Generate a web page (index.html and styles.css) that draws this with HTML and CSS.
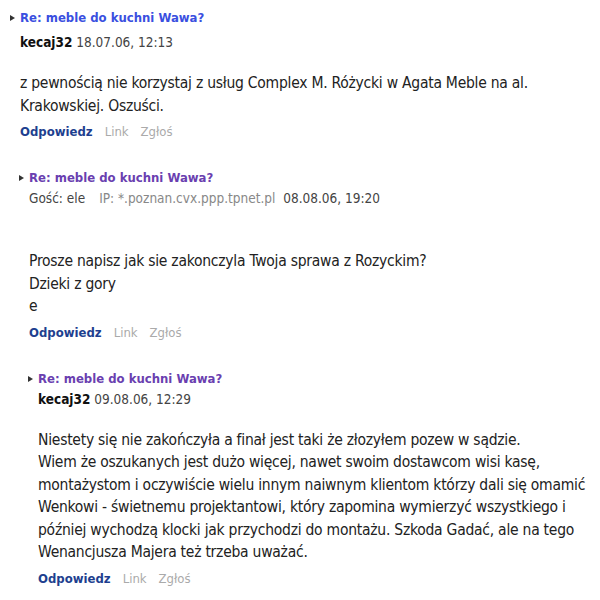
FILE: index.html
```html
<!DOCTYPE html>
<html lang="pl">
<head>
<meta charset="utf-8">
<title>Re: meble do kuchni Wawa?</title>
<link rel="stylesheet" href="styles.css">
</head>
<body>
<div class="thread">
  <div class="post">
    <div class="title"><span class="arrow"></span><a class="subject new" href="#">Re: meble do kuchni Wawa?</a></div>
    <div class="meta first"><b class="author">kecaj32</b> 18.07.06, 12:13</div>
    <div class="body">z pewnością nie korzystaj z usług Complex M. Różycki w Agata Meble na al. Krakowskiej. Oszuści.</div>
    <div class="actions"><a class="reply" href="#">Odpowiedz</a><span class="muted">Link</span><span class="muted">Zgłoś</span></div>

    <div class="post nested">
      <div class="title"><span class="arrow"></span><a class="subject visited" href="#">Re: meble do kuchni Wawa?</a></div>
      <div class="meta"><span class="guest">Gość: ele</span><span class="ip">IP: *.poznan.cvx.ppp.tpnet.pl</span> 08.08.06, 19:20</div>
      <div class="body spaced">Prosze napisz jak sie zakonczyla Twoja sprawa z Rozyckim?<br>Dzieki z gory<br>e</div>
      <div class="actions"><a class="reply" href="#">Odpowiedz</a><span class="muted">Link</span><span class="muted">Zgłoś</span></div>

      <div class="post nested">
        <div class="title"><span class="arrow"></span><a class="subject visited" href="#">Re: meble do kuchni Wawa?</a></div>
        <div class="meta"><b class="author">kecaj32</b> 09.08.06, 12:29</div>
        <div class="body">Niestety się nie zakończyła a finał jest taki że złozyłem pozew w sądzie.<br>Wiem że oszukanych jest dużo więcej, nawet swoim dostawcom wisi kasę, montażystom i oczywiście wielu innym naiwnym klientom którzy dali się omamić Wenkowi - świetnemu projektantowi, który zapomina wymierzyć wszystkiego i później wychodzą klocki jak przychodzi do montażu. Szkoda Gadać, ale na tego Wenancjusza Majera też trzeba uważać.</div>
        <div class="actions"><a class="reply" href="#">Odpowiedz</a><span class="muted">Link</span><span class="muted">Zgłoś</span></div>
      </div>
    </div>
  </div>
</div>
</body>
</html>
```
FILE: styles.css
```css
html, body {
  margin: 0;
  padding: 0;
  background: #fff;
}
body {
  font-family: "DejaVu Sans Condensed", "DejaVu Sans", sans-serif;
  color: #222;
}
.thread {
  padding: 10px 0 0 20px;
}
.post.nested {
  margin-top: 30px;
  margin-left: 9px;
}
.title {
  position: relative;
  font-size: 13px;
  font-weight: bold;
  line-height: 16px;
}
.arrow {
  position: absolute;
  left: -10px;
  top: 5px;
  width: 0;
  height: 0;
  border-left: 5px solid #333;
  border-top: 3px solid transparent;
  border-bottom: 3px solid transparent;
}
.subject {
  text-decoration: none;
}
.subject.new { color: #3a4fe0; }
.subject.visited { color: #6a3fb0; }
.meta {
  margin-top: 4px;
  font-size: 13.5px;
  line-height: 16px;
  color: #444;
}
.meta.first { margin-top: 8px; }
.author { color: #111; }
.guest { margin-right: 14px; }
.ip { color: #888; margin-right: 4px; }
.body {
  margin-top: 22px;
  font-size: 15.5px;
  letter-spacing: -0.25px;
  line-height: 22.5px;
  color: #222;
  max-width: 560px;
}
.body.spaced { margin-top: 44px; }
.actions {
  margin-top: 7px;
  font-size: 13px;
  line-height: 16px;
  display: flex;
  gap: 12px;
}
.reply {
  color: #1e3f8f;
  font-weight: bold;
  text-decoration: none;
}
.muted { color: #aaa; }
```
